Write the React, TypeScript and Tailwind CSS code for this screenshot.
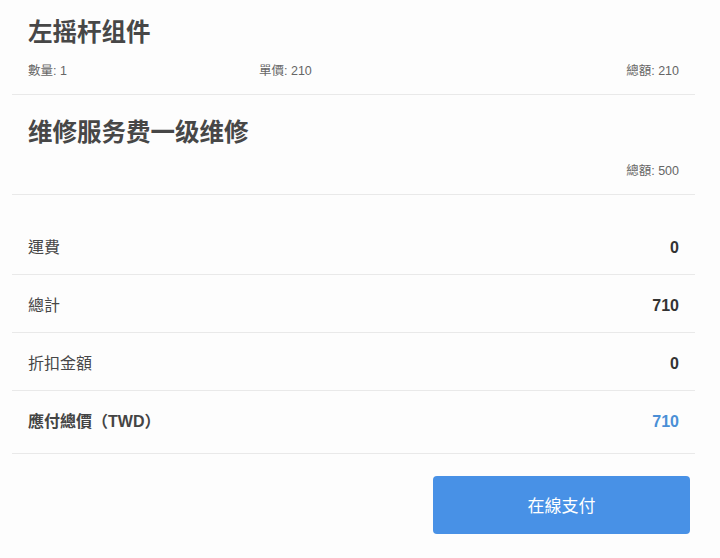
import React from 'react'

const rows = [
  { label: '運費', value: '0' },
  { label: '總計', value: '710' },
  { label: '折扣金額', value: '0' },
]

const App: React.FC = () => {
  return (
    <div
      className="min-h-[558px] w-[720px] bg-[#fdfdfd] pl-3 pr-[25px]"
      style={{ fontFamily: '"Liberation Sans", "Noto Sans CJK TC", sans-serif' }}
    >
      {/* Item: 左摇杆组件 */}
      <div className="border-b border-[#e9e9e9] px-4 pt-[17px] pb-[15px]">
        <h2 className="text-[24.5px] leading-8 font-bold text-[#474747]">左摇杆组件</h2>
        <div className="mt-[14px] flex text-[12.5px] leading-4 text-[#666]">
          <div className="w-[231px]">數量: 1</div>
          <div className="flex-1">單價: 210</div>
          <div>總額: 210</div>
        </div>
      </div>

      {/* Item: 维修服务费 */}
      <div className="border-b border-[#e9e9e9] px-4 pt-[22px] pb-[15px]">
        <h2 className="text-[24.5px] leading-8 font-bold text-[#474747]">维修服务费一级维修</h2>
        <div className="mt-[14px] flex justify-end text-[12.5px] leading-4 text-[#666]">
          <div>總額: 500</div>
        </div>
      </div>

      {/* Cost summary */}
      <div className="mt-[22px]">
        {rows.map((row) => (
          <div
            key={row.label}
            className="flex h-[58px] items-center justify-between border-b border-[#e9e9e9] px-4 pt-[5px] text-[16px]"
          >
            <span className="text-[#474747]">{row.label}</span>
            <span className="font-bold text-[#333]">{row.value}</span>
          </div>
        ))}
        <div className="flex h-[63px] items-center justify-between border-b border-[#e9e9e9] px-4 text-[16px]">
          <span className="font-bold text-[#444]">應付總價（TWD）</span>
          <span className="font-bold text-[#4a8fd6]">710</span>
        </div>
      </div>

      <div className="mt-[22px] flex justify-end pr-[5px]">
        <button className="h-[58px] w-[257px] rounded-[4px] bg-[#4891e6] pt-[3px] text-[17px] text-white">
          在線支付
        </button>
      </div>
    </div>
  )
}

export default App
